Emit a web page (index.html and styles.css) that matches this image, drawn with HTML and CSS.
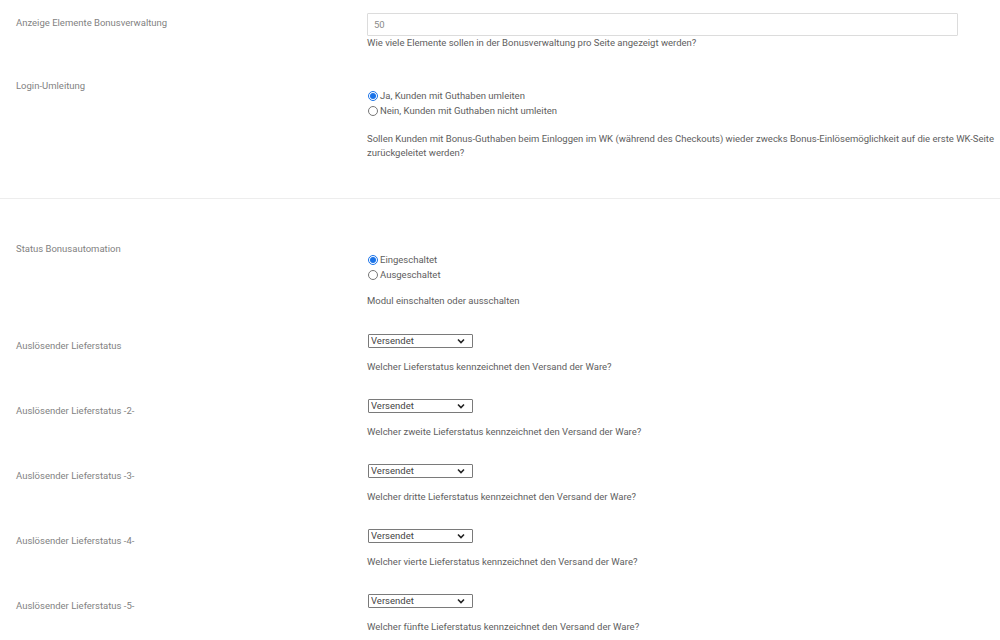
FILE: index.html
```html
<!DOCTYPE html>
<html lang="de">
<head>
<meta charset="utf-8">
<title>Bonus Einstellungen</title>
<link rel="stylesheet" href="styles.css">
</head>
<body>
<div class="page">
  <section class="group">
    <div class="row row-input">
      <div class="label">Anzeige Elemente Bonusverwaltung</div>
      <div class="control">
        <input class="text-input" type="text" value="50">
        <div class="desc desc-tight">Wie viele Elemente sollen in der Bonusverwaltung pro Seite angezeigt werden?</div>
      </div>
    </div>
    <div class="row row-radio row-login">
      <div class="label">Login-Umleitung</div>
      <div class="control">
        <label class="radio"><input type="radio" name="login" checked>Ja, Kunden mit Guthaben umleiten</label>
        <label class="radio"><input type="radio" name="login">Nein, Kunden mit Guthaben nicht umleiten</label>
        <div class="desc desc-multi">Sollen Kunden mit Bonus-Guthaben beim Einloggen im WK (während des Checkouts) wieder zwecks Bonus-Einlösemöglichkeit auf die erste WK-Seite zurückgeleitet werden?</div>
      </div>
    </div>
  </section>
  <section class="group group-second">
    <div class="row row-radio row-status">
      <div class="label">Status Bonusautomation</div>
      <div class="control">
        <label class="radio"><input type="radio" name="status" checked>Eingeschaltet</label>
        <label class="radio"><input type="radio" name="status">Ausgeschaltet</label>
        <div class="desc desc-gap">Modul einschalten oder ausschalten</div>
      </div>
    </div>
    <div class="row row-select">
      <div class="label">Auslösender Lieferstatus</div>
      <div class="control">
        <select class="select"><option>Versendet</option></select>
        <div class="desc desc-gap">Welcher Lieferstatus kennzeichnet den Versand der Ware?</div>
      </div>
    </div>
    <div class="row row-select">
      <div class="label">Auslösender Lieferstatus -2-</div>
      <div class="control">
        <select class="select"><option>Versendet</option></select>
        <div class="desc desc-gap">Welcher zweite Lieferstatus kennzeichnet den Versand der Ware?</div>
      </div>
    </div>
    <div class="row row-select">
      <div class="label">Auslösender Lieferstatus -3-</div>
      <div class="control">
        <select class="select"><option>Versendet</option></select>
        <div class="desc desc-gap">Welcher dritte Lieferstatus kennzeichnet den Versand der Ware?</div>
      </div>
    </div>
    <div class="row row-select">
      <div class="label">Auslösender Lieferstatus -4-</div>
      <div class="control">
        <select class="select"><option>Versendet</option></select>
        <div class="desc desc-gap">Welcher vierte Lieferstatus kennzeichnet den Versand der Ware?</div>
      </div>
    </div>
    <div class="row row-select">
      <div class="label">Auslösender Lieferstatus -5-</div>
      <div class="control">
        <select class="select"><option>Versendet</option></select>
        <div class="desc desc-gap">Welcher fünfte Lieferstatus kennzeichnet den Versand der Ware?</div>
      </div>
    </div>
  </section>
</div>
</body>
</html>
```

FILE: styles.css
```css
* { box-sizing: border-box; }
html, body {
  margin: 0;
  padding: 0;
  background: #fff;
}
body {
  font-family: Roboto, "Liberation Sans", sans-serif;
  font-size: 9.5px;
  color: #5e5e5e;
  width: 1000px;
  height: 640px;
  overflow: hidden;
}
.page {
  display: flex;
  flex-direction: column;
}
.group {
  display: flex;
  flex-direction: column;
  padding-top: 13px;
  padding-bottom: 38px;
  border-bottom: 1px solid #ededed;
}
.group-second {
  border-bottom: none;
  padding-top: 44px;
}
.row {
  display: grid;
  grid-template-columns: 367px 1fr;
  padding-right: 4px;
}
.label {
  padding-left: 16px;
  font-size: 9.5px;
  line-height: 12px;
  color: #828282;
}
.control {
  display: flex;
  flex-direction: column;
  align-items: flex-start;
}
.row-input .label { margin-top: 4px; }
.text-input {
  width: 591px;
  height: 23px;
  margin: 0;
  padding: 0 6px;
  border: 1px solid #dcdcdc;
  border-radius: 1px;
  font-family: inherit;
  font-size: 9.5px;
  color: #8a8a8a;
  background: #fff;
  outline: none;
}
.desc {
  line-height: 12px;
  color: #5e5e5e;
}
.desc-tight { margin-top: 1px; }
.desc-multi {
  margin-top: 14px;
  line-height: 14px;
}
.desc-gap { margin-top: 13px; }

.row-login { margin-top: 31px; }
.row-radio .control { padding-top: 8px; }
.row-status .control { padding-top: 9px; }
.radio {
  display: flex;
  align-items: center;
  height: 15px;
  color: #5e5e5e;
}
.radio input {
  width: 10px;
  height: 10px;
  margin: 0 2px 0 1px;
  accent-color: #1a73e8;
}

.row-select { margin-top: 27px; }
.row-select + .row-select { margin-top: 26px; }
.row-select .label { margin-top: 6px; }
.select {
  appearance: none;
  -webkit-appearance: none;
  width: 105px;
  height: 14px;
  margin: 0 0 0 1px;
  padding: 0 14px 0 2px;
  border: 1px solid #7a7a7a;
  border-radius: 1px;
  font-family: inherit;
  font-size: 9.5px;
  line-height: 12px;
  color: #444;
  background: #fff url("data:image/svg+xml,%3Csvg xmlns='http://www.w3.org/2000/svg' width='8' height='6' viewBox='0 0 8 6'%3E%3Cpath d='M1 1.5 L4 4.5 L7 1.5' fill='none' stroke='%23222' stroke-width='1.6'/%3E%3C/svg%3E") no-repeat right 7px center;
}
```
